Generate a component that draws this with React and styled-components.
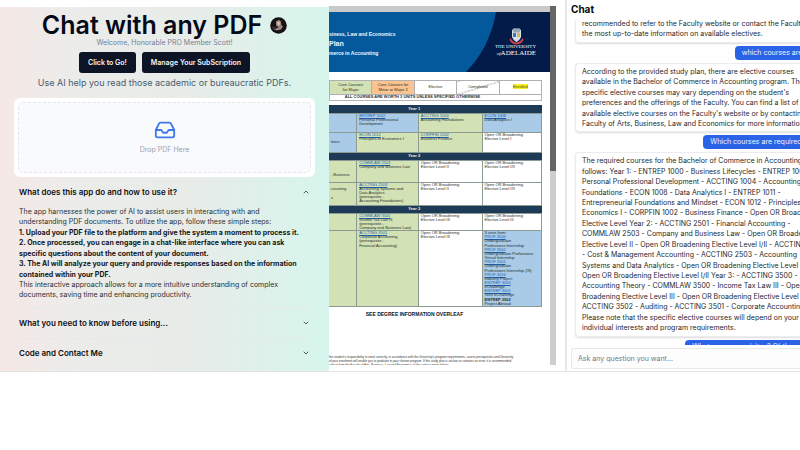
import React from "react";
import styled, { createGlobalStyle, css } from "styled-components";
import { ChevronDown, ChevronUp, Inbox } from "lucide-react";

const Global = createGlobalStyle`
  * { box-sizing: border-box; }
  body {
    margin: 0;
    background: #fff;
    overflow: hidden;
    font-family: Inter, "Liberation Sans", sans-serif;
    color: #111318;
  }
  h1, h2, h3, p { margin: 0; }
  button, input { font: inherit; }
`;

const Shell = styled.main`
  display: grid;
  grid-template-columns: minmax(0, 329fr) minmax(0, 236fr) minmax(0, 235fr);
  border-bottom: 1px solid #e3e3e3;
`;

/* ---------- left: landing column ---------- */

const Landing = styled.section`
  margin-top: 7px;
  padding: 4px 14px 3px;
  display: flex;
  flex-direction: column;
  align-items: center;
  background: linear-gradient(to right, #f5e8e6 0%, #ececea 22%, #e7ece9 60%, #d7f5ec 98%);
`;

const TitleRow = styled.div`
  display: flex;
  align-items: center;
  gap: 8px;
  height: 28px;
`;

const Title = styled.h1`
  font-size: 25px;
  line-height: 28px;
  font-weight: 600;
  color: #050a18;
  white-space: nowrap;
`;

const Welcome = styled.p`
  font-size: 7px;
  line-height: 8px;
  color: #74829a;
`;

const ButtonRow = styled.div`
  display: flex;
  gap: 6px;
  margin-top: 5px;
`;

const DarkButton = styled.button`
  height: 21px;
  padding: 0 9px;
  border: 0;
  border-radius: 3px;
  background: #0d1426;
  color: #f4f7fb;
  font-size: 7px;
  font-weight: 600;
  white-space: nowrap;
`;

const Tagline = styled.p`
  margin-top: 3px;
  font-size: 9px;
  line-height: 14px;
  color: #4c5b70;
  white-space: nowrap;
`;

const DropCard = styled.div`
  align-self: stretch;
  margin-top: 8px;
  padding: 4px;
  border-radius: 6px;
  background: #fff;
`;

const DropZone = styled.button`
  width: 100%;
  height: 71px;
  display: flex;
  flex-direction: column;
  align-items: center;
  justify-content: center;
  gap: 3px;
  padding: 0;
  border: 1px dashed #e4e5ee;
  border-radius: 5px;
  background: #f9fafc;
  color: #98a1b1;
  font-size: 7px;
  line-height: 12px;

  svg { color: #3f78e8; }
`;

const Accordion = styled.div`
  align-self: stretch;
  padding: 0 5px;
`;

const AccordionItem = styled.section`
  & + & { border-top: 1px solid #e3eae7; }
`;

const AccordionTrigger = styled.button`
  width: 100%;
  height: 29px;
  display: flex;
  align-items: center;
  justify-content: space-between;
  padding: 0;
  border: 0;
  background: none;
  color: #0c0f14;
  font-size: 8px;
  font-weight: 600;
  text-align: left;
`;

const AccordionBody = styled.div`
  padding: 1px 0 7px;
  font-size: 7px;
  line-height: 1.49;
  color: #2a2f33;
  white-space: pre;

  strong { font-weight: 700; color: #14171a; }
`;

/* ---------- middle: document viewer ---------- */

const Viewer = styled.section`
  contain: size;
  display: flex;
  margin: 6px 9px 6px 0;
  overflow: hidden;
  font-family: "Liberation Sans", Arial, sans-serif;
`;

const Sheet = styled.div`
  flex: 1;
  min-width: 0;
  border-top: 6px solid #c9c9c9;
`;

const ScrollTrack = styled.div`
  width: 6px;
  background: #cdcdcd;
`;

const ScrollThumb = styled.div`
  height: 46%;
  background: #666;
`;

const Banner = styled.header`
  display: flex;
  justify-content: space-between;
  height: 60px;
  background: #04599d;
  color: #eef6ff;
  overflow: hidden;
`;

const BannerText = styled.div`
  padding-top: 19px;
  font-weight: 700;
  font-size: 5px;
  line-height: 6px;
  white-space: nowrap;

  h2 { font-size: 7px; line-height: 13px; }
`;

const CrestPanel = styled.div`
  position: relative;
  width: 84px;
  flex: none;
`;

const CrestCurve = styled.svg`
  display: block;
  width: 100%;
  height: 100%;
`;

const CrestName = styled.p`
  position: absolute;
  right: 14px;
  top: 32px;
  font-family: "Liberation Serif", serif;
  font-size: 5px;
  line-height: 6px;
  color: #fff;
  text-align: right;
  white-space: nowrap;

  b { font-size: 7px; font-weight: 400; }
`;

const SheetBody = styled.div`
  padding: 8px 8px 0 0;
`;

const tones = {
  blue: "#a9cbe8",
  green: "#d3e2b5",
  orange: "#fbc38f",
  white: "#fff",
};

const PlanTable = styled.table`
  width: 100%;
  table-layout: fixed;
  border-collapse: collapse;
  font-size: 4px;
  line-height: 1.04;
  color: #26302c;
  margin-bottom: 4px;
`;

const LegendCell = styled.td`
  height: 14px;
  padding: 0;
  border: 1px solid #b0b0b0;
  background: ${(p) => tones[p.$tone || "white"]};
  text-align: center;

  ${(p) =>
    p.$struck &&
    css`
      background: linear-gradient(to bottom right, #fff 48%, #888 50%, #fff 52%);
    `}

  mark { background: #f6ee1c; color: #4c4a10; }
`;

const LegendNote = styled.td`
  height: 6px;
  padding: 0 46px 0 0;
  border: 1px solid #b5b5b5;
  text-align: center;
  font-weight: 700;
  white-space: nowrap;
`;

const YearCell = styled.th`
  height: 8px;
  padding: 0 42px 0 0;
  background: #1d3a56;
  color: #f0f4f8;
  text-align: center;
  vertical-align: middle;
`;

const CourseCell = styled.td`
  height: ${(p) => p.$h}px;
  padding: 0 0 0 2px;
  border: 1px solid #8c9a94;
  border-left-width: ${(p) => (p.$first ? 0 : 1)}px;
  background: ${(p) => tones[p.$tone]};
  vertical-align: ${(p) => (p.$first ? "middle" : "top")};
  white-space: pre;
  overflow: hidden;

  a { color: #1d5fae; font-weight: 400; text-decoration-thickness: from-font; }
`;

const Overleaf = styled.p`
  margin-top: 4px;
  padding-right: 42px;
  text-align: center;
  font-size: 5px;
  line-height: 6px;
  font-weight: 700;
`;

const SmallPrint = styled.p`
  margin-top: 38px;
  font-size: 3px;
  line-height: 4px;
  color: #333;
  white-space: pre;
`;

/* ---------- right: chat ---------- */

const ChatPane = styled.section`
  contain: size;
  display: flex;
  flex-direction: column;
  padding: 3px 0 2px 4px;
  border-left: 2px solid #e6e7ea;
  overflow: hidden;
`;

const ChatTitle = styled.h2`
  font-size: 10px;
  line-height: 13px;
  font-weight: 700;
  color: #08090c;
`;

const Messages = styled.div`
  flex: 1;
  min-height: 0;
  display: flex;
  flex-direction: column;
  justify-content: flex-start;
  gap: 3px;
  margin-top: 3px;
  padding-left: 4px;
  overflow: hidden;
`;

const Answer = styled.div`
  flex: none;
  padding: 3px 6px 2px;
  border: 1px solid #ececee;
  border-right: 0;
  border-radius: 4px 0 0 4px;
  box-shadow: 0 1px 2px rgba(0, 0, 0, 0.14);
  font-size: 7px;
  line-height: 1.49;
  color: #25282d;
  white-space: pre;

  &:first-child {
    border-top: 0;
    padding-top: 0;
  }
`;

const Question = styled.div`
  flex: none;
  margin-left: ${(p) => p.$indent}%;
  padding: 0 7px;
  border-radius: 4px 0 0 4px;
  background: #2a63e6;
  color: #eef3ff;
  font-size: 7px;
  line-height: 14px;
  white-space: pre;
`;

const Ask = styled.input`
  flex: none;
  height: 21px;
  margin-top: 3px;
  padding: 0 6px;
  border: 1px solid #e6e8ec;
  border-right: 0;
  border-radius: 3px 0 0 3px;
  background: #fdfdfd;
  font-size: 7px;

  &::placeholder { color: #707b8b; opacity: 1; }
`;

const course = (tone, code, text) => ({ tone, code, text });
const years = [
  {
    name: "Year 1",
    rows: [
      { h: 19, cells: [course("blue", "", ""), course("blue", "ENTREP 1002", "Personal Professional\nDevelopment"), course("green", "ACCTING 1004", "Accounting Foundations"), course("blue", "ECON 1008", "Data Analytics I")] },
      { h: 20, cells: [course("blue", "", "tions"), course("green", "ECON 1012", "Principles of Economics I"), course("green", "CORPFIN 1002", "Business Finance"), course("white", "", "Open OR Broadening\nElective Level I")] },
    ],
  },
  {
    name: "Year 2",
    rows: [
      { h: 22, cells: [course("green", "", "\n\n, Business"), course("green", "COMMLAW 2503", "Company and Business Law"), course("white", "", "Open OR Broadening\nElective Level II"), course("white", "", "Open OR Broadening\nElective Level I/II")] },
      { h: 23, cells: [course("green", "", "counting\n\ns"), course("green", "ACCTING 2503", "Accounting Systems and\nData Analytics\n(prerequisite -\nAccounting Foundations)"), course("white", "", "Open OR Broadening\nElective Level II"), course("white", "", "Open OR Broadening\nElective Level I/II")] },
    ],
  },
  {
    name: "Year 3",
    rows: [
      { h: 17, cells: [course("green", "", ""), course("green", "COMMLAW 3500", "Income Tax Law III\n(prerequisite -\nCompany and Business Law)"), course("white", "", "Open OR Broadening\nElective Level III"), course("white", "", "Open OR Broadening\nElective Level III")] },
      { h: 75, cells: [course("green", "", ""), course("green", "ACCTING 3501", "Corporate Accounting\n(prerequisite -\nFinancial Accounting)"), course("white", "", "Open OR Broadening\nElective Level III"), { tone: "blue", placements: true }] },
    ],
  },
];

const placements = [
  ["PROF 3500", "Undergraduate\nProfessions Internship"],
  ["PROF 3502", "Undergraduate Professions\nVirtual Internship"],
  ["PROF 3501", "Undergraduate\nProfessions Internship (IS)"],
  ["PROF 3016", "Industry Project"],
  ["ENTREP 3000", "eChallenge"],
  ["ENTREP 3001", "Tech eChallenge"],
];

function CourseText({ cell }) {
  if (cell.placements) {
    return (
      <>
        {"3 units from:\n"}
        {placements.map(([code, text]) => (
          <React.Fragment key={code}>
            <a href="#course">{code}</a>
            {"\n" + text + "\n"}
          </React.Fragment>
        ))}
        <b>ENTREP 3902</b>
        {"\nProject Abroad"}
      </>
    );
  }
  return (
    <>
      {cell.code && <a href="#course">{cell.code}</a>}
      {cell.code && "\n"}
      {cell.text}
    </>
  );
}

function Avatar() {
  return (
    <svg width="17" height="17" viewBox="0 0 17 17" role="img" aria-label="Profile">
      <circle cx="8.5" cy="8.5" r="8.3" fill="#171314" />
      <path d="M6 4.5 9 2.8 11 4.4 11.4 8 13 9.5 11 12.4 7 13.6 4.2 12.4 8.6 10.2 6.2 8.8Z" fill="#a08480" />
      <path d="M7 5.2 9.5 4.4 10 7.6 8 8.4Z" fill="#d9c3bb" />
      <path d="M2 9.5 6 10.5 4 13.5Z" fill="#44393a" />
    </svg>
  );
}

function Crest() {
  return (
    <CrestCurve viewBox="0 0 84 60" preserveAspectRatio="none" aria-hidden="true">
      <path d="M30 0H84V60H0C15 45 26 24 30 0Z" fill="#031b49" />
      <path d="M46 18q4-3 9 0v7q-1 3-4.500 5-3.500-2-4.500-5Z" fill="#d9e1e6" />
      <path d="M46.500 17.500 48 16l2.500 1 2.500-1 1.500 1.500-1 3h-6Z" fill="#92a7b8" />
      <path d="M47 21h3v4h-3Z" fill="#3d7cae" />
      <path d="M51 21h3v4h-3Z" fill="#e1b45b" />
      <path d="M44.500 26q2 4 6 4.500 4-.500 6-4.500l1 2q-2 4-7 4.500-5-.500-7-4.500Z" fill="#cf4050" />
    </CrestCurve>
  );
}

export default function App() {
  return (
    <>
      <Global />
      <Shell>
        <Landing>
          <TitleRow>
            <Title>Chat with any PDF</Title>
            <Avatar />
          </TitleRow>
          <Welcome>Welcome, Honorable PRO Member Scott!</Welcome>
          <ButtonRow>
            <DarkButton>Click to Go!</DarkButton>
            <DarkButton>Manage Your SubScription</DarkButton>
          </ButtonRow>
          <Tagline>Use AI help you read those academic or bureaucratic PDFs.</Tagline>
          <DropCard>
            <DropZone>
              <Inbox size={22} strokeWidth={2} />
              Drop PDF Here
            </DropZone>
          </DropCard>
          <Accordion>
            <AccordionItem>
              <AccordionTrigger aria-expanded="true">
                What does this app do and how to use it?
                <ChevronUp size={8} />
              </AccordionTrigger>
              <AccordionBody>
                <p>{"The app harnesses the power of AI to assist users in interacting with and\nunderstanding PDF documents. To utilize the app, follow these simple steps:"}</p>
                <strong>{"1. Upload your PDF file to the platform and give the system a moment to process it.\n2. Once processed, you can engage in a chat-like interface where you can ask\nspecific questions about the content of your document.\n3. The AI will analyze your query and provide responses based on the information\ncontained within your PDF."}</strong>
                <p>{"This interactive approach allows for a more intuitive understanding of complex\ndocuments, saving time and enhancing productivity."}</p>
              </AccordionBody>
            </AccordionItem>
            <AccordionItem>
              <AccordionTrigger aria-expanded="false">
                What you need to know before using...
                <ChevronDown size={8} />
              </AccordionTrigger>
            </AccordionItem>
            <AccordionItem>
              <AccordionTrigger aria-expanded="false">
                Code and Contact Me
                <ChevronDown size={8} />
              </AccordionTrigger>
            </AccordionItem>
          </Accordion>
        </Landing>

        <Viewer aria-label="Document">
          <Sheet>
            <Banner>
              <BannerText>
                <p>siness, Law and Economics</p>
                <h2>Plan</h2>
                <p>merce in Accounting</p>
              </BannerText>
              <CrestPanel>
                <Crest />
                <CrestName>
                  THE UNIVERSITY
                  <br />
                  <i>of</i>
                  <b>ADELAIDE</b>
                </CrestName>
              </CrestPanel>
            </Banner>
            <SheetBody>
              <PlanTable>
                <tbody>
                  <tr>
                    <LegendCell $tone="green">Core Courses<br />for Major</LegendCell>
                    <LegendCell $tone="orange">Core Courses for<br />Minor or Major 2</LegendCell>
                    <LegendCell>Elective</LegendCell>
                    <LegendCell $struck>Completed</LegendCell>
                    <LegendCell><mark>Enrolled</mark></LegendCell>
                  </tr>
                  <tr>
                    <LegendNote colSpan={5}>ALL COURSES ARE WORTH 3 UNITS UNLESS SPECIFIED OTHERWISE</LegendNote>
                  </tr>
                </tbody>
              </PlanTable>
              <PlanTable>
                <colgroup>
                  <col width="13%" />
                  <col width="29%" />
                  <col width="30%" />
                  <col width="28%" />
                </colgroup>
                <tbody>
                  {years.map((year) => (
                    <React.Fragment key={year.name}>
                      <tr>
                        <YearCell colSpan={4}>{year.name}</YearCell>
                      </tr>
                      {year.rows.map((row) => (
                        <tr key={row.h}>
                          {row.cells.map((cell, i) => (
                            <CourseCell key={i} $h={row.h} $tone={cell.tone} $first={i === 0}>
                              <CourseText cell={cell} />
                            </CourseCell>
                          ))}
                        </tr>
                      ))}
                    </React.Fragment>
                  ))}
                </tbody>
              </PlanTable>
              <Overleaf>SEE DEGREE INFORMATION OVERLEAF</Overleaf>
              <SmallPrint>{"the student's responsibility to enrol correctly, in accordance with the University's program requirements, course prerequisites and University\nof your enrolment will enable you to graduate in your chosen program. If this study plan is unclear or contains an error, it is recommended\nadvice from the Faculty of Arts, Business, Law and Economics at the contact points below."}</SmallPrint>
            </SheetBody>
          </Sheet>
          <ScrollTrack>
            <ScrollThumb />
          </ScrollTrack>
        </Viewer>

        <ChatPane>
          <ChatTitle>Chat</ChatTitle>
          <Messages>
            <Answer>{"recommended to refer to the Faculty website or contact the Faculty for\nthe most up-to-date information on available electives."}</Answer>
            <Question $indent={71}>which courses are elective?</Question>
            <Answer>{"According to the provided study plan, there are elective courses\navailable in the Bachelor of Commerce in Accounting program. The\nspecific elective courses may vary depending on the student's\npreferences and the offerings of the Faculty. You can find a list of\navailable elective courses on the Faculty's website or by contacting the\nFaculty of Arts, Business, Law and Economics for more information."}</Answer>
            <Question $indent={57}>Which courses are required?</Question>
            <Answer>{"The required courses for the Bachelor of Commerce in Accounting are as\nfollows: Year 1: - ENTREP 1000 - Business Lifecycles - ENTREP 1002 -\nPersonal Professional Development - ACCTING 1004 - Accounting\nFoundations - ECON 1008 - Data Analytics I - ENTREP 1011 -\nEntrepreneurial Foundations and Mindset - ECON 1012 - Principles of\nEconomics I - CORPFIN 1002 - Business Finance - Open OR Broadening\nElective Level Year 2: - ACCTING 2501 - Financial Accounting -\nCOMMLAW 2503 - Company and Business Law - Open OR Broadening\nElective Level II - Open OR Broadening Elective Level I/II - ACCTING 2502\n- Cost & Management Accounting - ACCTING 2503 - Accounting\nSystems and Data Analytics - Open OR Broadening Elective Level II -\nOpen OR Broadening Elective Level I/II Year 3: - ACCTING 3500 -\nAccounting Theory - COMMLAW 3500 - Income Tax Law III - Open OR\nBroadening Elective Level III - Open OR Broadening Elective Level III -\nACCTING 3502 - Auditing - ACCTING 3501 - Corporate Accounting.\nPlease note that the specific elective courses will depend on your\nindividual interests and program requirements."}</Answer>
            <Question $indent={49}>What are prerequisites? Of these courses</Question>
          </Messages>
          <Ask aria-label="Ask a question" placeholder="Ask any question you want..." />
        </ChatPane>
      </Shell>
    </>
  );
}
